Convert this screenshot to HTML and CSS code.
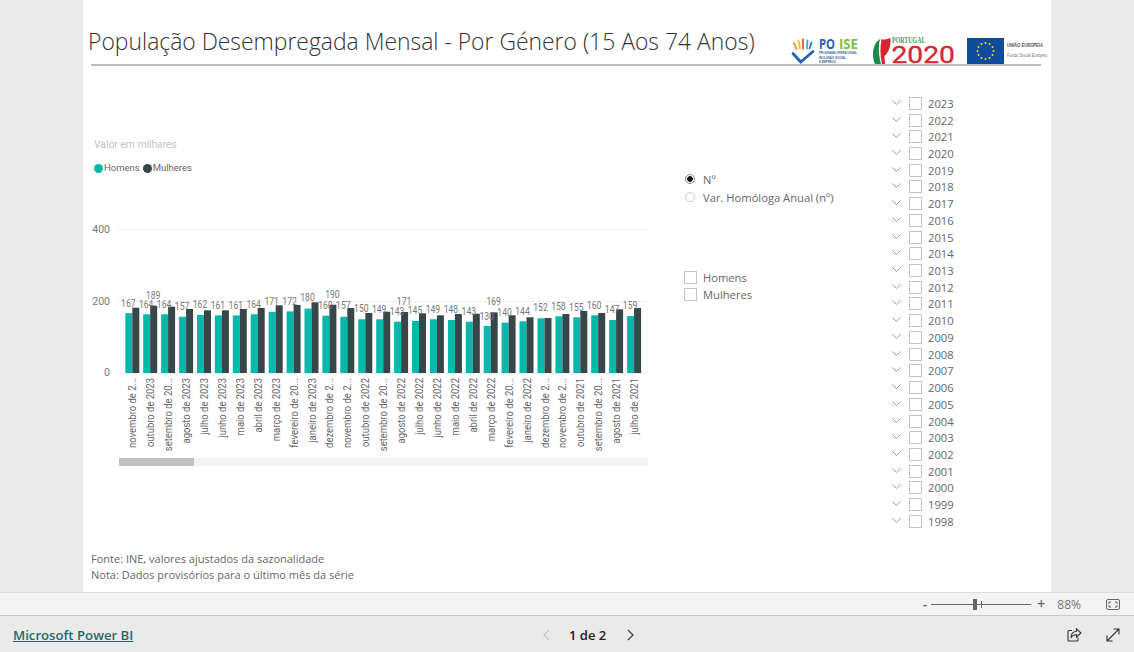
FILE: index.html
```html
<!DOCTYPE html>
<html lang="pt">
<head>
<meta charset="utf-8">
<title>População Desempregada Mensal</title>
<link rel="stylesheet" href="styles.css">
</head>
<body>
<div class="app">
  <main class="report">
    <header class="report-head">
      <h1 class="title">População Desempregada Mensal - Por Género (15 Aos 74 Anos)</h1>
      <div class="logos">
        <svg class="logo" width="68" height="32" viewBox="790 32 68 32">
          <g fill="none" stroke-linecap="round" stroke-width="1.800">
            <path d="M794 42l2.500 6" stroke="#f28c28"/>
            <path d="M798.500 39.500l1.500 8" stroke="#f7c325"/>
            <path d="M803 38.500v9" stroke="#e4572e"/>
            <path d="M807.500 39.500l-.5 8" stroke="#3aa7dc"/>
            <path d="M811.500 41.500l-2 6" stroke="#2a78c2"/>
            <path d="M793 52.500l7.700 8.500L813 50.500" stroke="#1f65ad" stroke-width="2.800"/>
          </g>
          <text class="logo-po" x="819" y="48" textLength="16" lengthAdjust="spacingAndGlyphs">PO</text>
          <text class="logo-ise" x="839" y="48" textLength="19" lengthAdjust="spacingAndGlyphs">ISE</text>
          <text class="logo-small" x="819" y="53" textLength="38" lengthAdjust="spacingAndGlyphs">PROGRAMA OPERACIONAL</text>
          <text class="logo-small" x="819" y="57.500" textLength="27" lengthAdjust="spacingAndGlyphs">INCLUSÃO SOCIAL</text>
          <text class="logo-small" x="819" y="62" textLength="17" lengthAdjust="spacingAndGlyphs">E EMPREGO</text>
        </svg>
        <svg class="logo" width="86" height="32" viewBox="870 32 86 32">
          <path d="M880 38c-5 3-7 9-7 15 0 4 .5 7 2 10h6c-2-7-3-17-1-25z" fill="#1c8a4a"/>
          <path d="M881.500 38c3 1 6 .5 9-1 .5 8-2 15-6 18l.5 8h-3c-2-8-2-17-.5-25z" fill="#d9232e"/>
          <text class="logo-pt" x="892" y="42" textLength="33.500" lengthAdjust="spacingAndGlyphs">PORTUGAL</text>
          <text class="logo-2020" x="891.500" y="62" textLength="63.500" lengthAdjust="spacingAndGlyphs">2020</text>
        </svg>
        <svg class="logo" width="82" height="32" viewBox="966 32 82 32">
          <rect x="967" y="37" width="37" height="26" fill="#0f4c9c"/>
          <g fill="#f5d90a">
            <circle cx="985.500" cy="42" r="1"/><circle cx="989.500" cy="43" r="1"/><circle cx="992.500" cy="46" r="1"/>
            <circle cx="993.500" cy="50" r="1"/><circle cx="992.500" cy="54" r="1"/><circle cx="989.500" cy="57" r="1"/>
            <circle cx="985.500" cy="58" r="1"/><circle cx="981.500" cy="57" r="1"/><circle cx="978.500" cy="54" r="1"/>
            <circle cx="977.500" cy="50" r="1"/><circle cx="978.500" cy="46" r="1"/><circle cx="981.500" cy="43" r="1"/>
          </g>
          <text class="logo-eu" x="1007" y="46" textLength="36" lengthAdjust="spacingAndGlyphs">UNIÃO EUROPEIA</text>
          <text class="logo-eu-sub" x="1007" y="56" textLength="40" lengthAdjust="spacingAndGlyphs">Fundo Social Europeu</text>
        </svg>
      </div>
    </header>

    <div class="report-body">
      <section class="chart">
        <div class="chart-head">
          <div class="chart-title">Valor em milhares</div>
          <div class="legend">
            <span class="legend-item"><i class="dot dot-men"></i>Homens</span>
            <span class="legend-item"><i class="dot dot-women"></i>Mulheres</span>
          </div>
        </div>
        <svg class="plot" width="570" height="260" viewBox="83 210 570 260">
          <g class="grid-lines">
            <rect x="118" y="229" width="530" height="1"/>
            <rect x="118" y="301" width="530" height="1"/>
            <rect x="118" y="373" width="530" height="1"/>
          </g>
          <g class="axis">
            <text x="110" y="233">400</text>
            <text x="110" y="305">200</text>
            <text x="110" y="376">0</text>
          </g>

          <g transform="translate(125.300 373)"><rect class="men" y="-59.800" width="7" height="59.800"/><rect class="women" x="7" y="-65.300" width="7" height="65.300"/><text class="val" x="3" y="-66" textLength="14.500" lengthAdjust="spacingAndGlyphs">167</text><text class="cat" transform="translate(11 5) rotate(-90) scale(.86 1)">novembro de 2...</text></g>
          <g transform="translate(143.200 373)"><rect class="men" y="-58.700" width="7" height="58.700"/><rect class="women" x="7" y="-67.300" width="7" height="67.300"/><text class="val" x="3" y="-65" textLength="14.500" lengthAdjust="spacingAndGlyphs">164</text><text class="val" x="10" y="-74.300" textLength="14.500" lengthAdjust="spacingAndGlyphs">189</text><text class="cat" transform="translate(11 5) rotate(-90) scale(.86 1)">outubro de 2023</text></g>
          <g transform="translate(161.100 373)"><rect class="men" y="-58.700" width="7" height="58.700"/><rect class="women" x="7" y="-66.300" width="7" height="66.300"/><text class="val" x="3" y="-65" textLength="14.500" lengthAdjust="spacingAndGlyphs">164</text><text class="cat" transform="translate(11 5) rotate(-90) scale(.86 1)">setembro de 20...</text></g>
          <g transform="translate(179.100 373)"><rect class="men" y="-56.200" width="7" height="56.200"/><rect class="women" x="7" y="-64" width="7" height="64"/><text class="val" x="3" y="-63.300" textLength="14.500" lengthAdjust="spacingAndGlyphs">157</text><text class="cat" transform="translate(11 5) rotate(-90) scale(.86 1)">agosto de 2023</text></g>
          <g transform="translate(197 373)"><rect class="men" y="-58" width="7" height="58"/><rect class="women" x="7" y="-62.700" width="7" height="62.700"/><text class="val" x="3" y="-65.300" textLength="14.500" lengthAdjust="spacingAndGlyphs">162</text><text class="cat" transform="translate(11 5) rotate(-90) scale(.86 1)">julho de 2023</text></g>
          <g transform="translate(214.900 373)"><rect class="men" y="-57.600" width="7" height="57.600"/><rect class="women" x="7" y="-62.700" width="7" height="62.700"/><text class="val" x="3" y="-64.300" textLength="14.500" lengthAdjust="spacingAndGlyphs">161</text><text class="cat" transform="translate(11 5) rotate(-90) scale(.86 1)">junho de 2023</text></g>
          <g transform="translate(232.800 373)"><rect class="men" y="-57.600" width="7" height="57.600"/><rect class="women" x="7" y="-64" width="7" height="64"/><text class="val" x="3" y="-64.300" textLength="14.500" lengthAdjust="spacingAndGlyphs">161</text><text class="cat" transform="translate(11 5) rotate(-90) scale(.86 1)">maio de 2023</text></g>
          <g transform="translate(250.700 373)"><rect class="men" y="-58.700" width="7" height="58.700"/><rect class="women" x="7" y="-65" width="7" height="65"/><text class="val" x="3" y="-65" textLength="14.500" lengthAdjust="spacingAndGlyphs">164</text><text class="cat" transform="translate(11 5) rotate(-90) scale(.86 1)">abril de 2023</text></g>
          <g transform="translate(268.700 373)"><rect class="men" y="-61.200" width="7" height="61.200"/><rect class="women" x="7" y="-67.700" width="7" height="67.700"/><text class="val" x="3" y="-68" textLength="14.500" lengthAdjust="spacingAndGlyphs">171</text><text class="cat" transform="translate(11 5) rotate(-90) scale(.86 1)">março de 2023</text></g>
          <g transform="translate(286.600 373)"><rect class="men" y="-61.600" width="7" height="61.600"/><rect class="women" x="7" y="-68" width="7" height="68"/><text class="val" x="3" y="-68.300" textLength="14.500" lengthAdjust="spacingAndGlyphs">172</text><text class="cat" transform="translate(11 5) rotate(-90) scale(.86 1)">fevereiro de 20...</text></g>
          <g transform="translate(304.500 373)"><rect class="men" y="-64.400" width="7" height="64.400"/><rect class="women" x="7" y="-70.700" width="7" height="70.700"/><text class="val" x="3" y="-71.700" textLength="14.500" lengthAdjust="spacingAndGlyphs">180</text><text class="cat" transform="translate(11 5) rotate(-90) scale(.86 1)">janeiro de 2023</text></g>
          <g transform="translate(322.400 373)"><rect class="men" y="-57.300" width="7" height="57.300"/><rect class="women" x="7" y="-68.300" width="7" height="68.300"/><text class="val" x="3" y="-64.300" textLength="14.500" lengthAdjust="spacingAndGlyphs">160</text><text class="val" x="10" y="-75.300" textLength="14.500" lengthAdjust="spacingAndGlyphs">190</text><text class="cat" transform="translate(11 5) rotate(-90) scale(.86 1)">dezembro de 2...</text></g>
          <g transform="translate(340.300 373)"><rect class="men" y="-56.200" width="7" height="56.200"/><rect class="women" x="7" y="-65" width="7" height="65"/><text class="val" x="3" y="-64" textLength="14.500" lengthAdjust="spacingAndGlyphs">157</text><text class="cat" transform="translate(11 5) rotate(-90) scale(.86 1)">novembro de 2...</text></g>
          <g transform="translate(358.300 373)"><rect class="men" y="-53.700" width="7" height="53.700"/><rect class="women" x="7" y="-60" width="7" height="60"/><text class="val" x="3" y="-60.700" textLength="14.500" lengthAdjust="spacingAndGlyphs">150</text><text class="cat" transform="translate(11 5) rotate(-90) scale(.86 1)">outubro de 2022</text></g>
          <g transform="translate(376.200 373)"><rect class="men" y="-53.700" width="7" height="53.700"/><rect class="women" x="7" y="-61.300" width="7" height="61.300"/><text class="val" x="3" y="-60.300" textLength="14.500" lengthAdjust="spacingAndGlyphs">149</text><text class="cat" transform="translate(11 5) rotate(-90) scale(.86 1)">setembro de 20...</text></g>
          <g transform="translate(394.100 373)"><rect class="men" y="-51.300" width="7" height="51.300"/><rect class="women" x="7" y="-61" width="7" height="61"/><text class="val" x="3" y="-58.300" textLength="14.500" lengthAdjust="spacingAndGlyphs">143</text><text class="val" x="10" y="-68.300" textLength="14.500" lengthAdjust="spacingAndGlyphs">171</text><text class="cat" transform="translate(11 5) rotate(-90) scale(.86 1)">agosto de 2022</text></g>
          <g transform="translate(412 373)"><rect class="men" y="-52" width="7" height="52"/><rect class="women" x="7" y="-59.700" width="7" height="59.700"/><text class="val" x="3" y="-59" textLength="14.500" lengthAdjust="spacingAndGlyphs">145</text><text class="cat" transform="translate(11 5) rotate(-90) scale(.86 1)">julho de 2022</text></g>
          <g transform="translate(429.900 373)"><rect class="men" y="-53.700" width="7" height="53.700"/><rect class="women" x="7" y="-57.700" width="7" height="57.700"/><text class="val" x="3" y="-60.300" textLength="14.500" lengthAdjust="spacingAndGlyphs">149</text><text class="cat" transform="translate(11 5) rotate(-90) scale(.86 1)">junho de 2022</text></g>
          <g transform="translate(447.900 373)"><rect class="men" y="-53" width="7" height="53"/><rect class="women" x="7" y="-59" width="7" height="59"/><text class="val" x="3" y="-60.300" textLength="14.500" lengthAdjust="spacingAndGlyphs">148</text><text class="cat" transform="translate(11 5) rotate(-90) scale(.86 1)">maio de 2022</text></g>
          <g transform="translate(465.800 373)"><rect class="men" y="-51.300" width="7" height="51.300"/><rect class="women" x="7" y="-59.300" width="7" height="59.300"/><text class="val" x="3" y="-58.300" textLength="14.500" lengthAdjust="spacingAndGlyphs">143</text><text class="cat" transform="translate(11 5) rotate(-90) scale(.86 1)">abril de 2022</text></g>
          <g transform="translate(483.700 373)"><rect class="men" y="-47" width="7" height="47"/><rect class="women" x="7" y="-60.700" width="7" height="60.700"/><text class="val" x="3" y="-53" textLength="14.500" lengthAdjust="spacingAndGlyphs">130</text><text class="val" x="10" y="-67.700" textLength="14.500" lengthAdjust="spacingAndGlyphs">169</text><text class="cat" transform="translate(11 5) rotate(-90) scale(.86 1)">março de 2022</text></g>
          <g transform="translate(501.600 373)"><rect class="men" y="-50.300" width="7" height="50.300"/><rect class="women" x="7" y="-57.700" width="7" height="57.700"/><text class="val" x="3" y="-57.300" textLength="14.500" lengthAdjust="spacingAndGlyphs">140</text><text class="cat" transform="translate(11 5) rotate(-90) scale(.86 1)">fevereiro de 20...</text></g>
          <g transform="translate(519.500 373)"><rect class="men" y="-51.700" width="7" height="51.700"/><rect class="women" x="7" y="-55.700" width="7" height="55.700"/><text class="val" x="3" y="-58.300" textLength="14.500" lengthAdjust="spacingAndGlyphs">144</text><text class="cat" transform="translate(11 5) rotate(-90) scale(.86 1)">janeiro de 2022</text></g>
          <g transform="translate(537.500 373)"><rect class="men" y="-54.700" width="7" height="54.700"/><rect class="women" x="7" y="-55" width="7" height="55"/><text class="val" x="3" y="-61.700" textLength="14.500" lengthAdjust="spacingAndGlyphs">152</text><text class="cat" transform="translate(11 5) rotate(-90) scale(.86 1)">dezembro de 2...</text></g>
          <g transform="translate(555.400 373)"><rect class="men" y="-56.700" width="7" height="56.700"/><rect class="women" x="7" y="-59" width="7" height="59"/><text class="val" x="3" y="-63.300" textLength="14.500" lengthAdjust="spacingAndGlyphs">158</text><text class="cat" transform="translate(11 5) rotate(-90) scale(.86 1)">novembro de 2...</text></g>
          <g transform="translate(573.300 373)"><rect class="men" y="-55.700" width="7" height="55.700"/><rect class="women" x="7" y="-62" width="7" height="62"/><text class="val" x="3" y="-62.300" textLength="14.500" lengthAdjust="spacingAndGlyphs">155</text><text class="cat" transform="translate(11 5) rotate(-90) scale(.86 1)">outubro de 2021</text></g>
          <g transform="translate(591.200 373)"><rect class="men" y="-57.700" width="7" height="57.700"/><rect class="women" x="7" y="-60" width="7" height="60"/><text class="val" x="3" y="-64" textLength="14.500" lengthAdjust="spacingAndGlyphs">160</text><text class="cat" transform="translate(11 5) rotate(-90) scale(.86 1)">setembro de 20...</text></g>
          <g transform="translate(609.100 373)"><rect class="men" y="-53" width="7" height="53"/><rect class="women" x="7" y="-63.700" width="7" height="63.700"/><text class="val" x="3" y="-60.300" textLength="14.500" lengthAdjust="spacingAndGlyphs">147</text><text class="cat" transform="translate(11 5) rotate(-90) scale(.86 1)">agosto de 2021</text></g>
          <g transform="translate(627.100 373)"><rect class="men" y="-57" width="7" height="57"/><rect class="women" x="7" y="-65" width="7" height="65"/><text class="val" x="3" y="-64" textLength="14.500" lengthAdjust="spacingAndGlyphs">159</text><text class="cat" transform="translate(11 5) rotate(-90) scale(.86 1)">julho de 2021</text></g>

          <rect class="scroll-track" x="119" y="458" width="529" height="8"/>
          <rect class="scroll-thumb" x="119" y="458" width="75" height="8"/>
        </svg>
      </section>

      <section class="controls">
        <div class="radio-group">
          <div class="option"><i class="radio radio-on"></i>Nº</div>
          <div class="option"><i class="radio"></i>Var. Homóloga Anual (nº)</div>
        </div>
        <div class="gender-group">
          <div class="option"><i class="check"></i>Homens</div>
          <div class="option"><i class="check"></i>Mulheres</div>
        </div>
      </section>

      <section class="years">
        <div class="year"><svg class="chev" width="9" height="5" viewBox="0 0 9 5"><path d="M.5.500l4 4 4-4"/></svg><i class="check"></i>2023</div>
        <div class="year"><svg class="chev" width="9" height="5" viewBox="0 0 9 5"><path d="M.5.500l4 4 4-4"/></svg><i class="check"></i>2022</div>
        <div class="year"><svg class="chev" width="9" height="5" viewBox="0 0 9 5"><path d="M.5.500l4 4 4-4"/></svg><i class="check"></i>2021</div>
        <div class="year"><svg class="chev" width="9" height="5" viewBox="0 0 9 5"><path d="M.5.500l4 4 4-4"/></svg><i class="check"></i>2020</div>
        <div class="year"><svg class="chev" width="9" height="5" viewBox="0 0 9 5"><path d="M.5.500l4 4 4-4"/></svg><i class="check"></i>2019</div>
        <div class="year"><svg class="chev" width="9" height="5" viewBox="0 0 9 5"><path d="M.5.500l4 4 4-4"/></svg><i class="check"></i>2018</div>
        <div class="year"><svg class="chev" width="9" height="5" viewBox="0 0 9 5"><path d="M.5.500l4 4 4-4"/></svg><i class="check"></i>2017</div>
        <div class="year"><svg class="chev" width="9" height="5" viewBox="0 0 9 5"><path d="M.5.500l4 4 4-4"/></svg><i class="check"></i>2016</div>
        <div class="year"><svg class="chev" width="9" height="5" viewBox="0 0 9 5"><path d="M.5.500l4 4 4-4"/></svg><i class="check"></i>2015</div>
        <div class="year"><svg class="chev" width="9" height="5" viewBox="0 0 9 5"><path d="M.5.500l4 4 4-4"/></svg><i class="check"></i>2014</div>
        <div class="year"><svg class="chev" width="9" height="5" viewBox="0 0 9 5"><path d="M.5.500l4 4 4-4"/></svg><i class="check"></i>2013</div>
        <div class="year"><svg class="chev" width="9" height="5" viewBox="0 0 9 5"><path d="M.5.500l4 4 4-4"/></svg><i class="check"></i>2012</div>
        <div class="year"><svg class="chev" width="9" height="5" viewBox="0 0 9 5"><path d="M.5.500l4 4 4-4"/></svg><i class="check"></i>2011</div>
        <div class="year"><svg class="chev" width="9" height="5" viewBox="0 0 9 5"><path d="M.5.500l4 4 4-4"/></svg><i class="check"></i>2010</div>
        <div class="year"><svg class="chev" width="9" height="5" viewBox="0 0 9 5"><path d="M.5.500l4 4 4-4"/></svg><i class="check"></i>2009</div>
        <div class="year"><svg class="chev" width="9" height="5" viewBox="0 0 9 5"><path d="M.5.500l4 4 4-4"/></svg><i class="check"></i>2008</div>
        <div class="year"><svg class="chev" width="9" height="5" viewBox="0 0 9 5"><path d="M.5.500l4 4 4-4"/></svg><i class="check"></i>2007</div>
        <div class="year"><svg class="chev" width="9" height="5" viewBox="0 0 9 5"><path d="M.5.500l4 4 4-4"/></svg><i class="check"></i>2006</div>
        <div class="year"><svg class="chev" width="9" height="5" viewBox="0 0 9 5"><path d="M.5.500l4 4 4-4"/></svg><i class="check"></i>2005</div>
        <div class="year"><svg class="chev" width="9" height="5" viewBox="0 0 9 5"><path d="M.5.500l4 4 4-4"/></svg><i class="check"></i>2004</div>
        <div class="year"><svg class="chev" width="9" height="5" viewBox="0 0 9 5"><path d="M.5.500l4 4 4-4"/></svg><i class="check"></i>2003</div>
        <div class="year"><svg class="chev" width="9" height="5" viewBox="0 0 9 5"><path d="M.5.500l4 4 4-4"/></svg><i class="check"></i>2002</div>
        <div class="year"><svg class="chev" width="9" height="5" viewBox="0 0 9 5"><path d="M.5.500l4 4 4-4"/></svg><i class="check"></i>2001</div>
        <div class="year"><svg class="chev" width="9" height="5" viewBox="0 0 9 5"><path d="M.5.500l4 4 4-4"/></svg><i class="check"></i>2000</div>
        <div class="year"><svg class="chev" width="9" height="5" viewBox="0 0 9 5"><path d="M.5.500l4 4 4-4"/></svg><i class="check"></i>1999</div>
        <div class="year"><svg class="chev" width="9" height="5" viewBox="0 0 9 5"><path d="M.5.500l4 4 4-4"/></svg><i class="check"></i>1998</div>
      </section>
    </div>

    <footer class="notes">
      <div>Fonte: INE, valores ajustados da sazonalidade</div>
      <div>Nota: Dados provisórios para o último mês da série</div>
    </footer>
  </main>

  <div class="zoombar">
    <span class="zoom-sign zoom-minus">-</span>
    <div class="slider"><i class="slider-thumb"></i><i class="slider-tick"></i></div>
    <span class="zoom-sign zoom-plus">+</span>
    <span class="zoom-value">88%</span>
    <svg class="fit" width="14" height="11" viewBox="0 0 14 11">
      <rect x=".5" y=".5" width="13" height="10" rx="1.500" fill="none" stroke="#666"/>
      <path d="M3 5V3h2M9 3h2v2M11 6v2H9M5 8H3V6" fill="none" stroke="#666"/>
    </svg>
  </div>

  <nav class="footer">
    <a class="brand" href="#">Microsoft Power BI</a>
    <div class="pager">
      <svg class="page-arrow" width="8" height="12" viewBox="0 0 8 12"><path class="arrow-off" d="M7 1L2 6l5 5"/></svg>
      <span class="page-label">1 de 2</span>
      <svg class="page-arrow" width="8" height="12" viewBox="0 0 8 12"><path class="arrow-on" d="M1 1l5 5-5 5"/></svg>
    </div>
    <div class="footer-actions">
      <svg width="15" height="14" viewBox="0 0 15 14" fill="none" stroke="#333" stroke-width="1.100">
        <path d="M5 2.500H2a1 1 0 0 0-1 1V12a1 1 0 0 0 1 1h8a1 1 0 0 0 1-1V9.500"/>
        <path d="M9.500.8L14 5l-4.500 4V6.800C7 6.800 5 7.500 4 10c0-4 2-6.500 5.500-6.800z"/>
      </svg>
      <svg width="14" height="14" viewBox="0 0 14 14" fill="none" stroke="#333" stroke-width="1.100">
        <path d="M1 13L13 1M7.500 1H13v5.500M1 7.500V13h5.500"/>
      </svg>
    </div>
  </nav>
</div>
</body>
</html>
```
FILE: styles.css
```css
* { box-sizing: border-box; }
html, body { margin: 0; height: 100%; }
body {
  background: #eaeaea;
  font-family: "Open Sans", "Liberation Sans", sans-serif;
  overflow: hidden;
}
.app { width: 1134px; height: 652px; display: flex; flex-direction: column; }

.report {
  width: 968px;
  height: 592px;
  margin-left: 83px;
  background: #fff;
  display: flex;
  flex-direction: column;
}
.report-head {
  height: 66px;
  margin: 0 10px 0 8px;
  border-bottom: 2px solid #bdbdbd;
  display: flex;
  justify-content: space-between;
  align-items: flex-end;
}
.title {
  margin: 0 0 5px -3px;
  font-size: 22.900px;
  font-weight: 300;
  line-height: 34px;
  color: #333;
  white-space: nowrap;
}
.logos { display: flex; flex: none; margin-right: -7px; margin-bottom: -1px; }
.logo { display: block; flex: none; margin-left: 12px; }
.logo:first-child { margin-left: 0; }
.logo:last-child { margin-left: 10px; }

.logo-po { font: 700 15px "Open Sans", sans-serif; fill: #1f65ad; }
.logo-ise { font: 700 15px "Open Sans", sans-serif; fill: #7cc042; }
.logo-small { font: 700 3.600px "Liberation Sans", sans-serif; fill: #39668f; }
.logo-pt { font: 700 8px "Liberation Serif", serif; fill: #4f9a58; }
.logo-2020 { font: 400 23px "Roboto", sans-serif; fill: #d7272f; stroke: #d7272f; stroke-width: .3px; }
.logo-eu { font: 700 5px "Liberation Sans", sans-serif; fill: #555; }
.logo-eu-sub { font: 400 5px "Liberation Sans", sans-serif; fill: #777; }

.report-body {
  flex: 1;
  display: grid;
  grid-template-columns: 570px 232px 1fr;
  min-height: 0;
}

.chart-head { height: 144px; padding: 71px 0 0 11px; }
.chart-title {
  font: 400 10.300px/16px "Roboto", sans-serif;
  color: #c2c2c2;
}
.legend { display: flex; gap: 3px; margin-top: 8px; }
.legend-item {
  display: flex;
  align-items: center;
  gap: 1px;
  font: 400 9.500px/14px "Roboto", sans-serif;
  color: #666;
}
.dot { width: 9px; height: 9px; border-radius: 50%; }
.dot-men { background: #01b8aa; }
.dot-women { background: #374649; }

.plot { display: block; }
.grid-lines rect { fill: #f0f0f0; }
.axis text { font: 400 10.500px "Roboto", sans-serif; fill: #777; text-anchor: end; }
.men { fill: #01b8aa; }
.women { fill: #374649; }
.val { font: 400 11px "Roboto", sans-serif; fill: #777; text-anchor: middle; }
.cat { font: 400 11px "Roboto", sans-serif; fill: #666; text-anchor: end; }
.scroll-track { fill: #f3f3f3; }
.scroll-thumb { fill: #c1c1c1; }

.controls { padding: 104px 0 0 31px; }
.option {
  display: flex;
  align-items: center;
  height: 18px;
  font-size: 11.200px;
  color: #666;
  white-space: nowrap;
}
.radio {
  width: 10px;
  height: 10px;
  margin: 0 8px 0 1px;
  border-radius: 50%;
  border: 1px solid #ccc;
  flex: none;
}
.radio-on {
  border: 1px solid #888;
  background: radial-gradient(circle, #111 0 2.500px, #fff 3.200px);
}
.check {
  display: block;
  width: 13px;
  height: 13px;
  border: 1px solid #c4c4c4;
  flex: none;
  margin-right: 6px;
}
.gender-group { margin-top: 63px; }
.gender-group .option { height: 17px; }

.years { padding: 29px 0 0 7px; }
.year {
  display: flex;
  align-items: center;
  height: 16.720px;
  font-size: 11.200px;
  color: #666;
}
.chev { fill: none; stroke: #999; margin-right: 8px; margin-top: -2px; flex: none; }

.notes {
  padding: 0 0 9px 8px;
  font-size: 11px;
  line-height: 16px;
  color: #666;
}

.zoombar {
  height: 24px;
  background: #f3f3f3;
  border-top: 1px solid #dcdcdc;
  border-bottom: 1px solid #c8c8c8;
  display: flex;
  align-items: center;
  justify-content: flex-end;
  padding-right: 14px;
  color: #666;
}
.zoom-sign { font-size: 14px; font-weight: 600; line-height: 20px; }
.slider {
  position: relative;
  width: 100px;
  height: 1px;
  margin: 0 6px 0 4px;
  background: #666;
}
.slider-thumb {
  position: absolute;
  left: 42px;
  top: -5px;
  width: 4px;
  height: 11px;
  background: #666;
}
.slider-tick {
  position: absolute;
  left: 50px;
  top: -3px;
  width: 1px;
  height: 7px;
  background: #666;
}
.zoom-value { margin: 0 25px 0 12px; font-size: 12px; color: #777; }
.fit { display: block; }

.footer {
  flex: 1;
  display: grid;
  grid-template-columns: 529px auto 1fr;
  align-items: center;
  padding: 2px 14px 0 13px;
  background: #eaeaea;
}
.brand {
  font-size: 13.200px;
  font-weight: 600;
  color: #1f6b6b;
  text-decoration: underline;
  white-space: nowrap;
}
.pager { display: flex; align-items: center; gap: 19px; }
.page-label { font-size: 13px; font-weight: 600; color: #222; margin-right: 2px; }
.page-arrow { display: block; fill: none; stroke-width: 1.300; }
.arrow-off { stroke: #c8c8c8; }
.arrow-on { stroke: #444; }
.footer-actions { display: flex; justify-content: flex-end; gap: 24px; align-items: center; }
```
